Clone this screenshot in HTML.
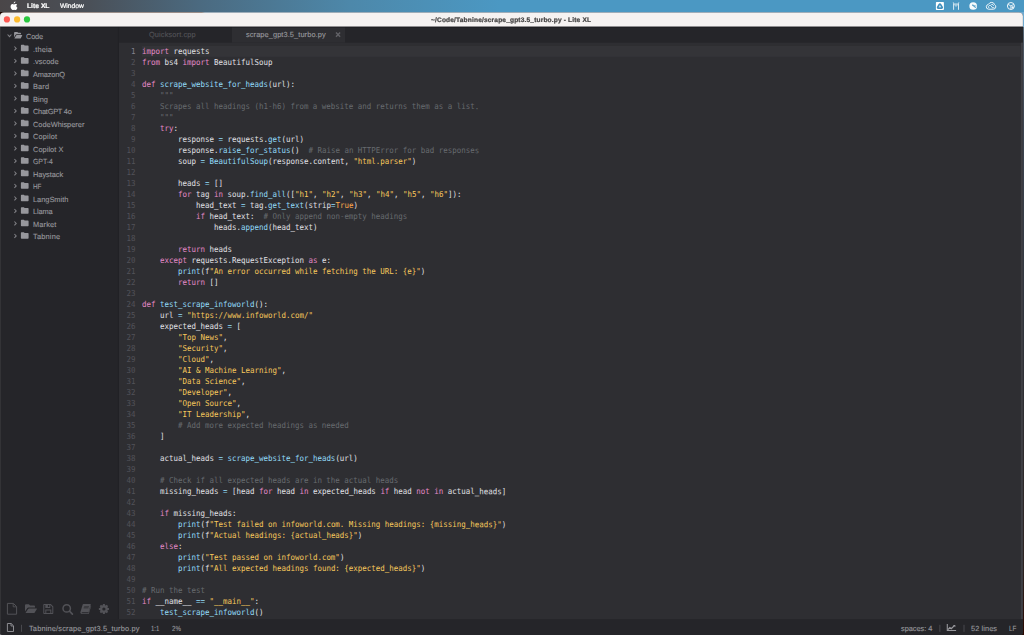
<!DOCTYPE html>
<html lang="en">
<head>
<meta charset="utf-8">
<title>~/Code/Tabnine/scrape_gpt3.5_turbo.py - Lite XL</title>
<style>
*{box-sizing:border-box;margin:0;padding:0}
html,body{width:1024px;height:635px;overflow:hidden;background:#252529}
body{position:relative;font-family:"Liberation Sans",sans-serif}
#bg{position:absolute;left:0;top:0;width:1024px;height:635px;display:block}
.u{position:absolute;white-space:pre;line-height:10px;height:10px;transform-origin:0 0;transform:matrix(1,0.0005,0,1,0,0)}
.g{filter:grayscale(0);-webkit-text-stroke:0.22px}
.b{font-weight:bold}
.u:not(.g){-webkit-text-stroke:0.12px}
#code{position:absolute;left:119px;top:46px;width:904px;font-family:"DejaVu Sans Mono","Liberation Mono",monospace;font-size:7.47px;color:#e1e1e6}
.ln{height:11px;line-height:11px;position:relative}
.no{position:absolute;left:0;width:16.4px;text-align:right;color:#525259}
.cur .no{color:#83838f}
.tx{position:absolute;left:22.7px;white-space:pre}
.no,.tx{transform:matrix(1,0.0005,0,1.1,0,0.05);transform-origin:0 8px}
.tx{transform-origin:180px 8px}
.k{color:#E58AC9}.f{color:#93DDFA}.o{color:#93DDFA}.s{color:#f7c95c}.c{color:#676b6f}.l{color:#FFA94D}
</style>
</head>
<body>
<svg id="bg" viewBox="0 0 1024 635">
 <defs>
  <linearGradient id="mb" x1="0" y1="0" x2="1024" y2="0" gradientUnits="userSpaceOnUse">
   <stop offset="0" stop-color="#4a4648"/><stop offset="0.088" stop-color="#4a5058"/><stop offset="0.195" stop-color="#4b6a80"/><stop offset="0.342" stop-color="#4d88aa"/><stop offset="0.488" stop-color="#4b98c3"/><stop offset="1" stop-color="#4b98c3"/>
  </linearGradient>
  <linearGradient id="dk" x1="0" y1="0" x2="1024" y2="0" gradientUnits="userSpaceOnUse">
   <stop offset="0" stop-color="#1c0500"/><stop offset="0.02" stop-color="#4a2410"/><stop offset="0.197" stop-color="#56280f"/><stop offset="0.2" stop-color="#5aa0cc"/><stop offset="1" stop-color="#6fa9cf"/>
  </linearGradient>
 </defs>
 <!-- desktop behind the window, menu bar -->
 <linearGradient id="rs" x1="0" y1="0" x2="0" y2="635" gradientUnits="userSpaceOnUse"><stop offset="0" stop-color="#6a8aa0"/><stop offset="0.07" stop-color="#4c5662"/><stop offset="0.2" stop-color="#3c4450"/><stop offset="0.5" stop-color="#30343c"/><stop offset="0.9" stop-color="#2c2220"/><stop offset="1" stop-color="#2a0800"/></linearGradient>
 <rect x="0" y="0" width="1024" height="635" fill="url(#rs)"/>
 <rect x="0" y="11" width="1024" height="16" fill="url(#dk)"/>
 <rect x="0" y="629" width="6" height="6" fill="#c9c9c9"/>
 <rect x="1018" y="629" width="6" height="6" fill="#2a0800"/>
 <rect x="0" y="0" width="1024" height="12" fill="url(#mb)"/>
 <!-- window body -->
 <path d="M0 632.5V16.6Q0 12.6 4 12.6H1018.9Q1022.9 12.6 1022.9 16.6V632.5Q1022.9 635 1020.4 635H2.5Q0 635 0 632.5Z" fill="#2e2e32"/>
 <!-- sidebar + tab bar + status bar -->
 <path d="M0 26.5H117.8V635H2.5Q0 635 0 632.5Z" fill="#252529"/>
 <rect x="117.8" y="26.5" width="1.2" height="592.7" fill="#212125"/>
 <rect x="119" y="26.5" width="903.9" height="16.2" fill="#252529"/>
 <rect x="232" y="26.5" width="113" height="16.2" fill="#2e2e32"/>
 <!-- title shadow --><rect x="1" y="27" width="1021.9" height="1" fill="#1a1a1d" opacity="0.5"/>
 <rect x="141.8" y="45.9" width="878.5" height="11" fill="#343438"/>
 <rect x="1020.9" y="42.7" width="2" height="576.5" fill="#3f3f44"/>
 <path d="M2 619.2H1022.9V632.5Q1022.9 635 1020.4 635H2Z" fill="#252529"/>
 <path d="M0 27H1V632Q1 634 2 635H2.5Q0 635 0 632.5Z" fill="#333336"/>
 <!-- title bar -->
 <path d="M0 26.5V16.6Q0 12.6 4 12.6H1018.9Q1022.9 12.6 1022.9 16.6V26.5H0Z" fill="#f5f2f1"/>
 <!-- traffic lights -->
 <circle cx="6.9" cy="19.45" r="3.1" fill="#fd5952"/>
 <circle cx="17.1" cy="19.45" r="3.1" fill="#fdbb2f"/>
 <circle cx="27" cy="19.45" r="3.1" fill="#2ac73f"/>
 <!-- apple logo -->
 <g transform="translate(9.6 1.3) scale(0.52)"><path fill="#fff" d="M11.2.3c.1 1-.3 2-.9 2.700-.6.800-1.600 1.300-2.500 1.200-.1-1 .400-2 .9-2.600.6-.7 1.700-1.300 2.500-1.300zM14.600 6.200c-.1.100-1.700 1-1.700 3 0 2.400 2.100 3.200 2.100 3.200 0 .1-.3 1.200-1.100 2.300-.7 1-1.400 2-2.500 2s-1.400-.6-2.700-.6c-1.200 0-1.700.7-2.700.7s-1.700-.9-2.500-2c-1.500-2.100-2.200-5.200-1.100-7.300.7-1.300 2-2.100 3.300-2.100 1.100 0 2 .7 2.700.7.600 0 1.700-.8 3-.7.500 0 2 .2 3.200.8z"/></g>
 <!--ICONS_START-->
 <!-- sidebar toolbar icons -->
 <g fill="none" stroke="#525257" stroke-width="1">
  <path d="M7.400 603.400H13.400L16.600 606.600V614.200H7.400Z"/>
  <path d="M13.200 603.600V606.800H16.400" stroke-width="0.900"/>
  <circle cx="66.700" cy="608.400" r="3.700" stroke-width="1.500"/>
  <path d="M69.500 611.200L72.400 614.100" stroke-width="1.700" stroke-linecap="round"/>
 </g>
 <g fill="#525257">
  <path d="M25 611.600V605.300Q25 604.300 26 604.300H28.800L30.100 605.600H34Q35 605.600 35 606.600V607.500H28.600Q27.700 607.500 27.200 608.300Z"/>
  <path d="M25.500 613L28.100 608.900Q28.400 608.400 29 608.400H36.500Q37.300 608.400 36.900 609.100L34.700 612.500Q34.400 613 33.800 613Z"/>
  <path fill-rule="evenodd" d="M43.300 604.800Q43.300 604 44.100 604H50.800L53.300 606.500V613.200Q53.300 614 52.500 614H44.100Q43.300 614 43.300 613.200ZM44.300 605V613H45.300V609.600H51.300V613H52.300V606.900L50.400 605H50.300V607.900H45.300V605ZM46.300 610.600V613H50.300V610.600ZM47.900 605V606.900H49.300V605Z"/>
  <path d="M83.500 603.900H90.300Q91 603.900 90.800 604.600L88.700 611.700Q88.500 612.300 87.900 612.300H82.300Q81.600 612.300 81.600 612.800Q81.600 613.200 82.300 613.200H88.300L90.900 605.500Q91.300 606 91.100 606.600L88.900 613.400Q88.700 614 88 614H82Q80.300 614 80.300 612.600Q80.300 612.200 80.500 611.700L82.700 604.600Q82.900 603.900 83.500 603.900ZM84.300 606L84.100 606.600H88.900L89.100 606ZM83.800 607.600L83.600 608.200H88.400L88.600 607.600Z" fill-rule="evenodd"/>
  <path fill-rule="evenodd" d="M102.83 605.14L102.88 603.95L104.92 603.95L104.97 605.14L105.87 605.52L106.75 604.71L108.19 606.15L107.38 607.03L107.76 607.93L108.95 607.98L108.95 610.02L107.76 610.07L107.38 610.97L108.19 611.85L106.75 613.29L105.87 612.48L104.97 612.86L104.92 614.05L102.88 614.05L102.83 612.86L101.93 612.48L101.05 613.29L99.61 611.85L100.42 610.97L100.04 610.07L98.85 610.02L98.85 607.98L100.04 607.93L100.42 607.03L99.61 606.15L101.05 604.71L101.93 605.52ZM103.90 607.40A1.60 1.60 0 1 0 103.90 610.60A1.60 1.60 0 1 0 103.90 607.40Z"/>
 </g>
 <!-- status bar icons -->
 <g fill="none" stroke="#97979c" stroke-width="0.900">
  <path d="M7.400 623.500H11.200L13.500 625.800V631.500H7.400Z"/>
  <path d="M11 623.700V626H13.300" stroke-width="0.800"/>
  <path d="M947.300 623.900V630.500H956.100" stroke-width="1.100"/>
  <path d="M948 629.700L949.800 627.600L951.300 628.600L954.300 625.600" stroke-width="1.300"/>
  <path d="M953 624.900H955.300V627.200Z" fill="#97979c" stroke="none"/>
 </g>
 <!-- menu bar status icons -->
 <rect x="935.9" y="2" width="8" height="8" rx="0.7" fill="#fff"/>
 <path d="M939.9 4.100Q940.300 4.100 940.600 4.600L942.100 7.200Q942.400 8.100 941.500 8.200H938.300Q937.400 8.100 937.700 7.200L939.200 4.600Q939.500 4.100 939.900 4.100Z" fill="#fff" stroke="#3f8fbd" stroke-width="1.700" stroke-linejoin="round"/>
 <rect x="939.200" y="6.500" width="1.400" height="0.900" fill="#7fb4d4"/>
 <g fill="none" stroke="#fff" opacity="0.800">
  <path d="M953.600 9.800V3.600L953.300 2.400M958.500 9.800V3.600L958.800 2.400" stroke-width="1"/>
  <path d="M953.600 4.100H958.500" stroke-width="1.100"/>
  <path d="M954.700 5.500Q956 6.600 957.400 5.500" stroke-width="0.900"/>
 </g>
 <circle cx="973.200" cy="6" r="3.850" fill="#fff" opacity="0.950"/>
 <path d="M972.300 4.900L975.700 7.700" fill="none" stroke="#4b98c3" stroke-width="1.100"/>
 <path d="M972.300 4.900L976.400 6.100" fill="none" stroke="#4b98c3" stroke-width="0.600"/>
 <g fill="none" stroke="#fff" stroke-width="1" opacity="0.900">
  <path d="M988.600 9.200Q986.200 9 986.300 6.700Q986.500 4.700 988.500 4.300Q989.600 2.300 991.800 2.400Q994.100 2.600 994.600 4.700Q996 5.300 995.800 7.100Q995.500 9.100 993.400 9.200Z"/>
  <path d="M988.900 7.900Q987.700 6.300 989.300 5.500Q990.500 5 991.300 6.200L992.500 7.800Q993.700 8.300 994.200 7.100M991.400 4.500Q993.100 4.100 993.600 5.700"/>
 </g>
 <g fill="none" stroke="#fff" opacity="0.900">
  <circle cx="1010.900" cy="6" r="3.500" stroke-width="1"/>
  <path d="M1008 4.400L1010.900 5.900L1013.800 4.400M1010.900 5.900V9.400" stroke-width="0.900"/>
 </g>
 <circle cx="1012.600" cy="7.400" r="1.100" fill="#fff" opacity="0.900"/>
 <!-- tab close + status separators -->
 <path d="M336 32.600L340.100 36.700M340.100 32.600L336 36.700" fill="none" stroke="#626267" stroke-width="1.450"/>
 <g fill="#525257">
  <rect x="21.200" y="624.800" width="0.800" height="7"/>
  <rect x="939.500" y="624.800" width="0.800" height="7"/>
  <rect x="963.600" y="624.800" width="0.800" height="7"/>
 </g>
<!--ICONS_END-->
<g fill="none" stroke="#808085" stroke-width="1.05">
<path d="M7.6 34.5 L9.5 36.6 L11.4 34.5"/>
<path d="M14.4 46.5 L16.2 48.4 L14.4 50.3"/>
<path d="M14.4 59 L16.2 60.9 L14.4 62.8"/>
<path d="M14.4 71.5 L16.2 73.4 L14.4 75.3"/>
<path d="M14.4 84 L16.2 85.9 L14.4 87.8"/>
<path d="M14.4 96.5 L16.2 98.4 L14.4 100.3"/>
<path d="M14.4 109 L16.2 110.9 L14.4 112.8"/>
<path d="M14.4 121.5 L16.2 123.4 L14.4 125.3"/>
<path d="M14.4 134 L16.2 135.9 L14.4 137.8"/>
<path d="M14.4 146.5 L16.2 148.4 L14.4 150.3"/>
<path d="M14.4 159 L16.2 160.9 L14.4 162.8"/>
<path d="M14.4 171.5 L16.2 173.4 L14.4 175.3"/>
<path d="M14.4 184 L16.2 185.9 L14.4 187.8"/>
<path d="M14.4 196.5 L16.2 198.4 L14.4 200.3"/>
<path d="M14.4 209 L16.2 210.9 L14.4 212.8"/>
<path d="M14.4 221.5 L16.2 223.4 L14.4 225.3"/>
<path d="M14.4 234 L16.2 235.9 L14.4 237.8"/>
</g>
<g fill="#97979c">
<path d="M14.1 37.6V32.7Q14.1 31.9 14.9 31.9H17.3L18.2 32.8H20.3Q21 32.8 21 33.5V34.2H16.6Q15.9 34.2 15.6 34.8Z"/>
<path d="M14.4 38.6L16.1 35.4Q16.3 35 16.8 35H21.9Q22.5 35 22.2 35.5L20.8 38.2Q20.6 38.6 20.1 38.6Z"/>
<path d="M20.9 45.4Q20.9 44.7 21.6 44.7H23.8L24.7 45.6H27.9Q28.6 45.6 28.6 46.3V50.5Q28.6 51.2 27.9 51.2H21.6Q20.9 51.2 20.9 50.5Z"/>
<path d="M20.9 57.9Q20.9 57.2 21.6 57.2H23.8L24.7 58.1H27.9Q28.6 58.1 28.6 58.8V63Q28.6 63.7 27.9 63.7H21.6Q20.9 63.7 20.9 63Z"/>
<path d="M20.9 70.4Q20.9 69.7 21.6 69.7H23.8L24.7 70.6H27.9Q28.6 70.6 28.6 71.3V75.5Q28.6 76.2 27.9 76.2H21.6Q20.9 76.2 20.9 75.5Z"/>
<path d="M20.9 82.9Q20.9 82.2 21.6 82.2H23.8L24.7 83.1H27.9Q28.6 83.1 28.6 83.8V88Q28.6 88.7 27.9 88.7H21.6Q20.9 88.7 20.9 88Z"/>
<path d="M20.9 95.4Q20.9 94.7 21.6 94.7H23.8L24.7 95.6H27.9Q28.6 95.6 28.6 96.3V100.5Q28.6 101.2 27.9 101.2H21.6Q20.9 101.2 20.9 100.5Z"/>
<path d="M20.9 107.9Q20.9 107.2 21.6 107.2H23.8L24.7 108.1H27.9Q28.6 108.1 28.6 108.8V113Q28.6 113.7 27.9 113.7H21.6Q20.9 113.7 20.9 113Z"/>
<path d="M20.9 120.4Q20.9 119.7 21.6 119.7H23.8L24.7 120.6H27.9Q28.6 120.6 28.6 121.3V125.5Q28.6 126.2 27.9 126.2H21.6Q20.9 126.2 20.9 125.5Z"/>
<path d="M20.9 132.9Q20.9 132.2 21.6 132.2H23.8L24.7 133.1H27.9Q28.6 133.1 28.6 133.8V138Q28.6 138.7 27.9 138.7H21.6Q20.9 138.7 20.9 138Z"/>
<path d="M20.9 145.4Q20.9 144.7 21.6 144.7H23.8L24.7 145.6H27.9Q28.6 145.6 28.6 146.3V150.5Q28.6 151.2 27.9 151.2H21.6Q20.9 151.2 20.9 150.5Z"/>
<path d="M20.9 157.9Q20.9 157.2 21.6 157.2H23.8L24.7 158.1H27.9Q28.6 158.1 28.6 158.8V163Q28.6 163.7 27.9 163.7H21.6Q20.9 163.7 20.9 163Z"/>
<path d="M20.9 170.4Q20.9 169.7 21.6 169.7H23.8L24.7 170.6H27.9Q28.6 170.6 28.6 171.3V175.5Q28.6 176.2 27.9 176.2H21.6Q20.9 176.2 20.9 175.5Z"/>
<path d="M20.9 182.9Q20.9 182.2 21.6 182.2H23.8L24.7 183.1H27.9Q28.6 183.1 28.6 183.8V188Q28.6 188.7 27.9 188.7H21.6Q20.9 188.7 20.9 188Z"/>
<path d="M20.9 195.4Q20.9 194.7 21.6 194.7H23.8L24.7 195.6H27.9Q28.6 195.6 28.6 196.3V200.5Q28.6 201.2 27.9 201.2H21.6Q20.9 201.2 20.9 200.5Z"/>
<path d="M20.9 207.9Q20.9 207.2 21.6 207.2H23.8L24.7 208.1H27.9Q28.6 208.1 28.6 208.8V213Q28.6 213.7 27.9 213.7H21.6Q20.9 213.7 20.9 213Z"/>
<path d="M20.9 220.4Q20.9 219.7 21.6 219.7H23.8L24.7 220.6H27.9Q28.6 220.6 28.6 221.3V225.5Q28.6 226.2 27.9 226.2H21.6Q20.9 226.2 20.9 225.5Z"/>
<path d="M20.9 232.9Q20.9 232.2 21.6 232.2H23.8L24.7 233.1H27.9Q28.6 233.1 28.6 233.8V238Q28.6 238.7 27.9 238.7H21.6Q20.9 238.7 20.9 238Z"/>
</g>
</svg>
<nav id="menubar">
<span class="u g b" style="left:26.61px;top:1.02px;font-size:6.7px;color:#ffffff;letter-spacing:0.026px">Lite XL</span>
<span class="u g" style="left:59.54px;top:1.16px;font-size:6.7px;color:#ffffff;letter-spacing:0.015px">Window</span>
</nav>
<header id="titlebar">
<span class="u g b" style="left:431.41px;top:14.87px;font-size:6.6px;color:#454444;letter-spacing:0.155px">~/Code/Tabnine/scrape_gpt3.5_turbo.py - Lite XL</span>
</header>
<aside id="sidebar">
<span class="u" style="left:25.95px;top:32.11px;font-size:7.4px;color:#97979c;letter-spacing:-0.198px">Code</span>
<span class="u" style="left:32.65px;top:44.61px;font-size:7.4px;color:#97979c;letter-spacing:0.171px">.theia</span>
<span class="u" style="left:32.66px;top:57.11px;font-size:7.4px;color:#97979c;letter-spacing:0.020px">.vscode</span>
<span class="u" style="left:32.92px;top:69.61px;font-size:7.4px;color:#97979c;letter-spacing:-0.137px">AmazonQ</span>
<span class="u" style="left:33.03px;top:82.11px;font-size:7.4px;color:#97979c;letter-spacing:0.126px">Bard</span>
<span class="u" style="left:33.04px;top:94.61px;font-size:7.4px;color:#97979c;letter-spacing:0.053px">Bing</span>
<span class="u" style="left:32.9px;top:107.11px;font-size:7.4px;color:#97979c;letter-spacing:-0.241px">ChatGPT 4o</span>
<span class="u" style="left:32.93px;top:119.61px;font-size:7.4px;color:#97979c">CodeWhisperer</span>
<span class="u" style="left:32.95px;top:132.11px;font-size:7.4px;color:#97979c;letter-spacing:0.188px">Copilot</span>
<span class="u" style="left:32.93px;top:144.61px;font-size:7.4px;color:#97979c;letter-spacing:0.052px">Copilot X</span>
<span class="u" style="left:32.92px;top:157.11px;font-size:7.4px;color:#97979c;transform:matrix(0.9309,0.0005,0,1,0,0)">GPT-4</span>
<span class="u" style="left:33.06px;top:169.61px;font-size:7.4px;color:#97979c;letter-spacing:-0.031px">Haystack</span>
<span class="u" style="left:33.06px;top:182.11px;font-size:7.4px;color:#97979c;transform:matrix(0.8554,0.0005,0,1,0,0)">HF</span>
<span class="u" style="left:33.03px;top:194.61px;font-size:7.4px;color:#97979c;letter-spacing:-0.006px">LangSmith</span>
<span class="u" style="left:33.04px;top:207.11px;font-size:7.4px;color:#97979c;letter-spacing:-0.103px">Llama</span>
<span class="u" style="left:32.94px;top:219.61px;font-size:7.4px;color:#97979c;letter-spacing:0.152px">Market</span>
<span class="u" style="left:32.81px;top:232.11px;font-size:7.4px;color:#97979c;letter-spacing:0.209px">Tabnine</span>
</aside>
<div id="tabs">
<span class="u" style="left:149.06px;top:30.31px;font-size:7.4px;color:#525257;letter-spacing:0.122px">Quicksort.cpp</span>
<span class="u" style="left:245.5px;top:30.31px;font-size:7.4px;color:#97979c;letter-spacing:0.094px">scrape_gpt3.5_turbo.py</span>
</div>
<main id="editor">
<div id="code">
<div class="ln cur"><span class="no">1</span><span class="tx"><span class="k">import</span> requests</span></div>
<div class="ln"><span class="no">2</span><span class="tx"><span class="k">from</span> bs4 <span class="k">import</span> BeautifulSoup</span></div>
<div class="ln"><span class="no">3</span><span class="tx"></span></div>
<div class="ln"><span class="no">4</span><span class="tx"><span class="k">def</span> <span class="f">scrape_website_for_heads</span>(url):</span></div>
<div class="ln"><span class="no">5</span><span class="tx">    <span class="c">"""</span></span></div>
<div class="ln"><span class="no">6</span><span class="tx"><span class="c">    Scrapes all headings (h1-h6) from a website and returns them as a list.</span></span></div>
<div class="ln"><span class="no">7</span><span class="tx"><span class="c">    """</span></span></div>
<div class="ln"><span class="no">8</span><span class="tx">    <span class="k">try</span>:</span></div>
<div class="ln"><span class="no">9</span><span class="tx">        response <span class="o">=</span> requests.<span class="f">get</span>(url)</span></div>
<div class="ln"><span class="no">10</span><span class="tx">        response.<span class="f">raise_for_status</span>()  <span class="c"># Raise an HTTPError for bad responses</span></span></div>
<div class="ln"><span class="no">11</span><span class="tx">        soup <span class="o">=</span> <span class="f">BeautifulSoup</span>(response.content, <span class="s">"html.parser"</span>)</span></div>
<div class="ln"><span class="no">12</span><span class="tx"></span></div>
<div class="ln"><span class="no">13</span><span class="tx">        heads <span class="o">=</span> []</span></div>
<div class="ln"><span class="no">14</span><span class="tx">        <span class="k">for</span> tag <span class="k">in</span> soup.<span class="f">find_all</span>([<span class="s">"h1"</span>, <span class="s">"h2"</span>, <span class="s">"h3"</span>, <span class="s">"h4"</span>, <span class="s">"h5"</span>, <span class="s">"h6"</span>]):</span></div>
<div class="ln"><span class="no">15</span><span class="tx">            head_text <span class="o">=</span> tag.<span class="f">get_text</span>(strip<span class="o">=</span><span class="l">True</span>)</span></div>
<div class="ln"><span class="no">16</span><span class="tx">            <span class="k">if</span> head_text:  <span class="c"># Only append non-empty headings</span></span></div>
<div class="ln"><span class="no">17</span><span class="tx">                heads.<span class="f">append</span>(head_text)</span></div>
<div class="ln"><span class="no">18</span><span class="tx"></span></div>
<div class="ln"><span class="no">19</span><span class="tx">        <span class="k">return</span> heads</span></div>
<div class="ln"><span class="no">20</span><span class="tx">    <span class="k">except</span> requests.RequestException <span class="k">as</span> e:</span></div>
<div class="ln"><span class="no">21</span><span class="tx">        <span class="f">print</span>(f<span class="s">"An error occurred while fetching the URL: {e}"</span>)</span></div>
<div class="ln"><span class="no">22</span><span class="tx">        <span class="k">return</span> []</span></div>
<div class="ln"><span class="no">23</span><span class="tx"></span></div>
<div class="ln"><span class="no">24</span><span class="tx"><span class="k">def</span> <span class="f">test_scrape_infoworld</span>():</span></div>
<div class="ln"><span class="no">25</span><span class="tx">    url <span class="o">=</span> <span class="s">"https://www.infoworld.com/"</span></span></div>
<div class="ln"><span class="no">26</span><span class="tx">    expected_heads <span class="o">=</span> [</span></div>
<div class="ln"><span class="no">27</span><span class="tx">        <span class="s">"Top News"</span>,</span></div>
<div class="ln"><span class="no">28</span><span class="tx">        <span class="s">"Security"</span>,</span></div>
<div class="ln"><span class="no">29</span><span class="tx">        <span class="s">"Cloud"</span>,</span></div>
<div class="ln"><span class="no">30</span><span class="tx">        <span class="s">"AI &amp; Machine Learning"</span>,</span></div>
<div class="ln"><span class="no">31</span><span class="tx">        <span class="s">"Data Science"</span>,</span></div>
<div class="ln"><span class="no">32</span><span class="tx">        <span class="s">"Developer"</span>,</span></div>
<div class="ln"><span class="no">33</span><span class="tx">        <span class="s">"Open Source"</span>,</span></div>
<div class="ln"><span class="no">34</span><span class="tx">        <span class="s">"IT Leadership"</span>,</span></div>
<div class="ln"><span class="no">35</span><span class="tx">        <span class="c"># Add more expected headings as needed</span></span></div>
<div class="ln"><span class="no">36</span><span class="tx">    ]</span></div>
<div class="ln"><span class="no">37</span><span class="tx"></span></div>
<div class="ln"><span class="no">38</span><span class="tx">    actual_heads <span class="o">=</span> <span class="f">scrape_website_for_heads</span>(url)</span></div>
<div class="ln"><span class="no">39</span><span class="tx"></span></div>
<div class="ln"><span class="no">40</span><span class="tx">    <span class="c"># Check if all expected heads are in the actual heads</span></span></div>
<div class="ln"><span class="no">41</span><span class="tx">    missing_heads <span class="o">=</span> [head <span class="k">for</span> head <span class="k">in</span> expected_heads <span class="k">if</span> head <span class="k">not</span> <span class="k">in</span> actual_heads]</span></div>
<div class="ln"><span class="no">42</span><span class="tx"></span></div>
<div class="ln"><span class="no">43</span><span class="tx">    <span class="k">if</span> missing_heads:</span></div>
<div class="ln"><span class="no">44</span><span class="tx">        <span class="f">print</span>(f<span class="s">"Test failed on infoworld.com. Missing headings: {missing_heads}"</span>)</span></div>
<div class="ln"><span class="no">45</span><span class="tx">        <span class="f">print</span>(f<span class="s">"Actual headings: {actual_heads}"</span>)</span></div>
<div class="ln"><span class="no">46</span><span class="tx">    <span class="k">else</span>:</span></div>
<div class="ln"><span class="no">47</span><span class="tx">        <span class="f">print</span>(<span class="s">"Test passed on infoworld.com"</span>)</span></div>
<div class="ln"><span class="no">48</span><span class="tx">        <span class="f">print</span>(f<span class="s">"All expected headings found: {expected_heads}"</span>)</span></div>
<div class="ln"><span class="no">49</span><span class="tx"></span></div>
<div class="ln"><span class="no">50</span><span class="tx"><span class="c"># Run the test</span></span></div>
<div class="ln"><span class="no">51</span><span class="tx"><span class="k">if</span> __name__ <span class="o">==</span> <span class="s">"__main__"</span>:</span></div>
<div class="ln"><span class="no">52</span><span class="tx">    <span class="f">test_scrape_infoworld</span>()</span></div>
</div>
</main>
<footer id="statusbar">
<span class="u" style="left:28.61px;top:624.01px;font-size:7.4px;color:#97979c;letter-spacing:0.169px">Tabnine/scrape_gpt3.5_turbo.py</span>
<span class="u" style="left:151.4px;top:624.01px;font-size:7.4px;color:#97979c;transform:matrix(0.7994,0.0005,0,1,0,0)">1:1</span>
<span class="u" style="left:172.21px;top:624.01px;font-size:7.4px;color:#97979c;transform:matrix(0.8277,0.0005,0,1,0,0)">2%</span>
<span class="u" style="left:901.43px;top:624.01px;font-size:7.4px;color:#97979c;letter-spacing:-0.047px">spaces: 4</span>
<span class="u" style="left:971.27px;top:624.01px;font-size:7.4px;color:#97979c;letter-spacing:0.077px">52 lines</span>
<span class="u" style="left:1008.96px;top:624.01px;font-size:7.4px;color:#97979c;transform:matrix(0.8504,0.0005,0,1,0,0)">LF</span>
</footer>
</body>
</html>
